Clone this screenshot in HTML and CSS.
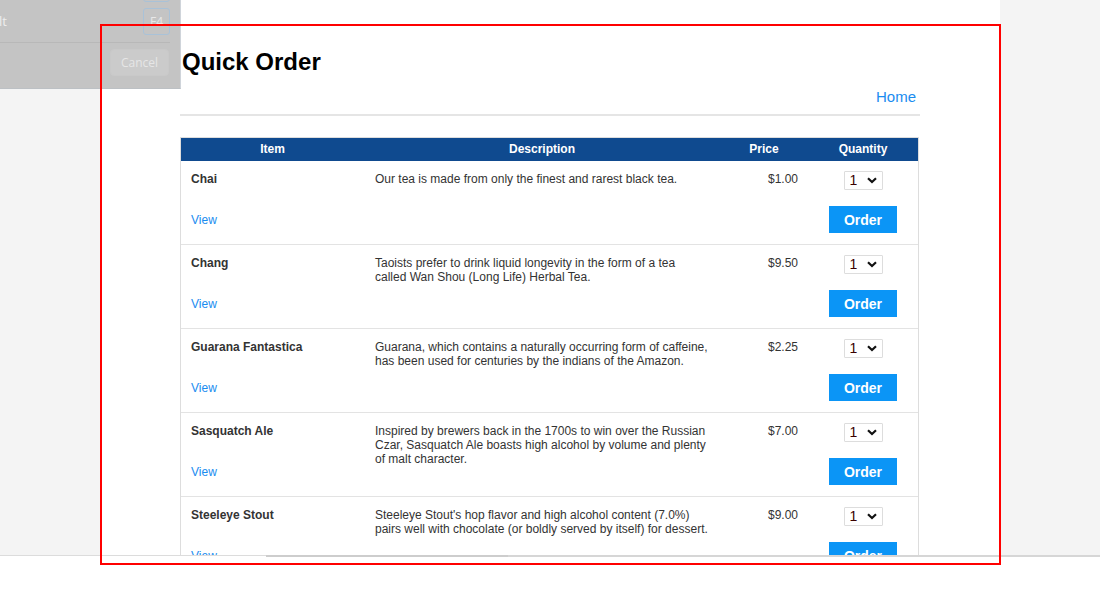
FILE: index.html
```html
<!DOCTYPE html>
<html lang="en">
<head>
<meta charset="utf-8">
<title>Quick Order</title>
<link rel="stylesheet" href="styles.css">
</head>
<body>
<div class="screen">
  <div class="gutter"></div>
  <main class="page">
    <div class="container">
      <h2 class="title">Quick Order</h2>
      <div class="nav"><a class="link" href="#">Home</a></div>
      <hr class="rule">
      <div class="table">
        <div class="row head">
          <div class="th">Item</div>
          <div class="th">Description</div>
          <div class="th">Price</div>
          <div class="th">Quantity</div>
        </div>

        <div class="row">
          <div class="cell item"><span class="name">Chai</span><a class="view" href="#">View</a></div>
          <div class="cell desc">Our tea is made from only the finest and rarest black tea.</div>
          <div class="cell price">$1.00</div>
          <div class="cell qty">
            <div class="qsel"><select class="sel"><option>1</option><option>2</option><option>3</option></select><svg class="chev" width="10" height="7" viewBox="0 0 10 7"><path d="M1 1.2 L5 5 L9 1.2" fill="none" stroke="#111" stroke-width="2.2"/></svg></div>
            <button class="order">Order</button>
          </div>
        </div>

        <div class="row">
          <div class="cell item"><span class="name">Chang</span><a class="view" href="#">View</a></div>
          <div class="cell desc">Taoists prefer to drink liquid longevity in the form of a tea called Wan Shou (Long Life) Herbal Tea.</div>
          <div class="cell price">$9.50</div>
          <div class="cell qty">
            <div class="qsel"><select class="sel"><option>1</option><option>2</option><option>3</option></select><svg class="chev" width="10" height="7" viewBox="0 0 10 7"><path d="M1 1.2 L5 5 L9 1.2" fill="none" stroke="#111" stroke-width="2.2"/></svg></div>
            <button class="order">Order</button>
          </div>
        </div>

        <div class="row">
          <div class="cell item"><span class="name">Guarana Fantastica</span><a class="view" href="#">View</a></div>
          <div class="cell desc">Guarana, which contains a naturally occurring form of caffeine, has been used for centuries by the indians of the Amazon.</div>
          <div class="cell price">$2.25</div>
          <div class="cell qty">
            <div class="qsel"><select class="sel"><option>1</option><option>2</option><option>3</option></select><svg class="chev" width="10" height="7" viewBox="0 0 10 7"><path d="M1 1.2 L5 5 L9 1.2" fill="none" stroke="#111" stroke-width="2.2"/></svg></div>
            <button class="order">Order</button>
          </div>
        </div>

        <div class="row">
          <div class="cell item"><span class="name">Sasquatch Ale</span><a class="view" href="#">View</a></div>
          <div class="cell desc">Inspired by brewers back in the 1700s to win over the Russian Czar, Sasquatch Ale boasts high alcohol by volume and plenty of malt character.</div>
          <div class="cell price">$7.00</div>
          <div class="cell qty">
            <div class="qsel"><select class="sel"><option>1</option><option>2</option><option>3</option></select><svg class="chev" width="10" height="7" viewBox="0 0 10 7"><path d="M1 1.2 L5 5 L9 1.2" fill="none" stroke="#111" stroke-width="2.2"/></svg></div>
            <button class="order">Order</button>
          </div>
        </div>

        <div class="row">
          <div class="cell item"><span class="name">Steeleye Stout</span><a class="view" href="#">View</a></div>
          <div class="cell desc">Steeleye Stout's hop flavor and high alcohol content (7.0%) pairs well with chocolate (or boldly served by itself) for dessert.</div>
          <div class="cell price">$9.00</div>
          <div class="cell qty">
            <div class="qsel"><select class="sel"><option>1</option><option>2</option><option>3</option></select><svg class="chev" width="10" height="7" viewBox="0 0 10 7"><path d="M1 1.2 L5 5 L9 1.2" fill="none" stroke="#111" stroke-width="2.2"/></svg></div>
            <button class="order">Order</button>
          </div>
        </div>
      </div>
    </div>
  </main>
  <div class="gutter"></div>
</div>
<div class="scrolltrack"><div class="thumb"></div></div>

<div class="panel">
  <div class="key key-top"></div>
  <div class="panel-row">
    <span class="panel-label">lt</span>
    <span class="key">F4</span>
  </div>
  <div class="panel-foot">
    <button class="cancel">Cancel</button>
  </div>
</div>
<div class="highlight"></div>
</body>
</html>
```

FILE: styles.css
```css
* { box-sizing: border-box; }

html, body {
  margin: 0;
  padding: 0;
  background: #ffffff;
  font-family: "Liberation Sans", Arial, sans-serif;
  color: #333333;
}

body {
  position: relative;
  width: 1100px;
  height: 589px;
  overflow: hidden;
}

.screen {
  display: flex;
  height: 556px;
  overflow: hidden;
  border-bottom: 1px solid #dcdcdc;
}

.gutter {
  width: 100px;
  flex: none;
  background: #f4f4f4;
}

.page {
  width: 900px;
  flex: none;
  background: #ffffff;
  overflow: hidden;
}

.container {
  margin-left: 80px;
  width: 740px;
}

.title {
  margin: 48px 0 0 2px;
  font-size: 24px;
  line-height: 28px;
  font-weight: bold;
  color: #000000;
}

.nav {
  margin-top: 12px;
  padding-right: 4px;
  text-align: right;
  font-size: 15px;
  line-height: 18px;
}

.link {
  color: #1a8cf0;
  text-decoration: none;
}

.rule {
  margin: 8px 0 0 0;
  border: 0;
  height: 2px;
  background: #e5e5e5;
}

.table {
  margin-top: 21px;
  width: 739px;
  border: 1px solid #dddddd;
  border-bottom: 0;
}

.row {
  display: grid;
  grid-template-columns: 183px 356px 88px 110px;
  height: 84px;
  border-bottom: 1px solid #e3e3e3;
}

.row.head {
  height: 23px;
  background: #0f4a8f;
  border-bottom: 0;
}

.th {
  color: #ffffff;
  font-weight: bold;
  font-size: 12px;
  line-height: 23px;
  text-align: center;
}

.cell {
  font-size: 12px;
  line-height: 14px;
}

.item {
  display: flex;
  flex-direction: column;
  align-items: flex-start;
  padding: 11px 10px 0 10px;
}

.name {
  font-weight: bold;
  color: #333333;
}

.view {
  margin-top: 27px;
  color: #1a8cf0;
  text-decoration: none;
}

.desc {
  padding: 11px 12px 0 11px;
  color: #333333;
}

.price {
  padding: 11px 10px 0 0;
  text-align: right;
}

.qty {
  display: flex;
  flex-direction: column;
  align-items: center;
  padding-top: 10px;
}

.qsel {
  position: relative;
  width: 39px;
  height: 19px;
}

.sel {
  appearance: none;
  -webkit-appearance: none;
  width: 39px;
  height: 19px;
  margin: 0;
  padding: 0 0 0 5px;
  border: 1px solid #dddddd;
  border-radius: 1px;
  background: #ffffff;
  font-family: "Liberation Sans", Arial, sans-serif;
  font-size: 14px;
  line-height: 17px;
  color: #3a0000;
}

.chev {
  position: absolute;
  right: 6px;
  top: 6px;
  pointer-events: none;
}

.order {
  margin-top: 16px;
  width: 68px;
  height: 27px;
  border: 0;
  padding: 0;
  background: #0b95f6;
  color: #ffffff;
  font-family: "Liberation Sans", Arial, sans-serif;
  font-weight: bold;
  font-size: 14px;
}

.scrolltrack {
  position: absolute;
  left: 266px;
  top: 555px;
  width: 834px;
  height: 2px;
  background: #d6d6d6;
}

.thumb {
  width: 242px;
  height: 2px;
  background: #cdcdcd;
}

.panel {
  position: absolute;
  left: 0;
  top: 0;
  width: 181px;
  height: 89px;
  background: #c4c4c4;
  border-right: 1px solid #cfd4da;
  border-bottom: 1px solid #bcc0c4;
  overflow: hidden;
  font-family: "Open Sans", "Liberation Sans", sans-serif;
}

.key {
  display: flex;
  align-items: center;
  justify-content: center;
  width: 27px;
  height: 27px;
  border: 1px solid #a9c2d8;
  border-radius: 3px;
  color: #e8e8e8;
  font-size: 12px;
}

.key-top {
  position: absolute;
  left: 143px;
  top: -25px;
}

.panel-row {
  display: flex;
  align-items: center;
  justify-content: space-between;
  height: 43px;
  padding: 0 10px 0 0;
  margin-right: 10px;
  border-bottom: 1px solid #b8b8b8;
}

.panel-label {
  margin-left: -1px;
  color: #eeeeee;
  font-size: 13px;
}

.panel-row .key {
  margin-right: -10px;
}

.panel-foot {
  display: flex;
  justify-content: flex-end;
  padding: 6px 11px 0 0;
}

.cancel {
  width: 59px;
  height: 27px;
  border: 1px solid #c9c9c9;
  border-radius: 4px;
  background: #cbcbcb;
  color: #e6e6e6;
  font-family: "Open Sans", "Liberation Sans", sans-serif;
  font-size: 12px;
  padding: 0;
}

.highlight {
  position: absolute;
  left: 100px;
  top: 24px;
  width: 901px;
  height: 541px;
  border: 2px solid #ff0000;
  pointer-events: none;
}
```
